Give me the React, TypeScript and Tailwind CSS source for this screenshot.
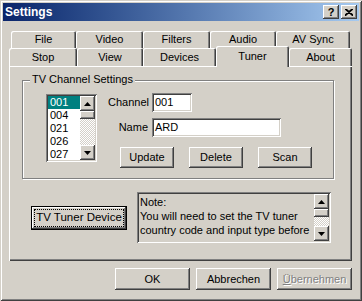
const raised =
  "bg-[#d4d0c8] shadow-[inset_-1px_-1px_#404040,inset_1px_1px_#ffffff,inset_-2px_-2px_#808080,inset_2px_2px_#d4d0c8]";
const sunken =
  "shadow-[inset_1px_1px_#808080,inset_-1px_-1px_#ffffff,inset_2px_2px_#404040,inset_-2px_-2px_#d4d0c8]";
const tabShadow =
  "shadow-[inset_1px_1px_#ffffff,inset_-1px_0_#404040,inset_-2px_0_#808080]";

const Arrow = ({ up }: { up?: boolean }) => (
  <svg width="7" height="4" viewBox="0 0 7 4">
    {up ? <polygon points="3.5,0 7,4 0,4" fill="#000" /> : <polygon points="0,0 7,0 3.5,4" fill="#000" />}
  </svg>
);

const ScrollBar = () => (
  <div className="flex w-[15px] shrink-0 flex-col self-stretch">
    <div className={`flex h-[15px] items-center justify-center ${raised}`}>
      <Arrow up />
    </div>
    <div className={`h-[8px] ${raised}`} />
    <div className="flex-1 bg-[image:repeating-conic-gradient(#ffffff_0%_25%,#d4d0c8_0%_50%)] bg-[length:2px_2px]" />
    <div className={`flex h-[15px] items-center justify-center ${raised}`}>
      <Arrow />
    </div>
  </div>
);

const Tab = ({ label, w }: { label: string; w: string }) => (
  <div className={`flex h-full items-center justify-center rounded-t-[2px] bg-[#d4d0c8] ${tabShadow} ${w}`}>
    {label}
  </div>
);

const Btn = ({ label, w, h }: { label: React.ReactNode; w: string; h: string }) => (
  <div className={`flex items-center justify-center ${raised} ${w} ${h}`}>{label}</div>
);

export default function App() {
  const channels = ["001", "004", "021", "026", "027"];
  return (
    <div className="h-[301px] w-[362px] overflow-hidden bg-[#d4d0c8] p-[3px] font-['Liberation_Sans',Arial,sans-serif] text-[11px] text-black shadow-[inset_1px_1px_#d4d0c8,inset_-1px_-1px_#404040,inset_2px_2px_#ffffff,inset_-2px_-2px_#808080]">
      {/* title bar */}
      <div className="flex h-[18px] items-center justify-between bg-gradient-to-r from-[#0a246a] to-[#a6caf0] pl-[2px] pr-[2px]">
        <span className="text-[12px] font-bold text-white">Settings</span>
        <div className="flex gap-[2px]">
          <div className={`flex h-[14px] w-[16px] items-center justify-center text-[11px] font-bold leading-none ${raised}`}>?</div>
          <div className={`flex h-[14px] w-[16px] items-center justify-center ${raised}`}>
            <svg width="8" height="7" viewBox="0 0 8 7">
              <path d="M0 0 L8 7 M1 0 L8 6 M8 0 L0 7 M7 0 L0 6" stroke="#000" strokeWidth="1.2" />
            </svg>
          </div>
        </div>
      </div>

      {/* tab rows */}
      <div className="mt-[10px] ml-[8px] flex h-[17px]">
        <Tab label="File" w="w-[65px]" />
        <Tab label="Video" w="w-[67px]" />
        <Tab label="Filters" w="w-[67px]" />
        <Tab label="Audio" w="w-[66px]" />
        <Tab label="AV Sync" w="w-[74px]" />
      </div>
      <div className="ml-[6px] flex h-[18px]">
        <Tab label="Stop" w="w-[68px]" />
        <Tab label="View" w="w-[66px]" />
        <Tab label="Devices" w="w-[73px]" />
        <div className={`relative z-10 -mt-[2px] -mb-[1px] flex h-[21px] w-[73px] items-start justify-center rounded-t-[2px] bg-[#d4d0c8] pt-[2px] ${tabShadow}`}>
          Tuner
        </div>
        <Tab label="About" w="w-[63px]" />
      </div>

      {/* tab page */}
      <div className="ml-[6px] h-[195px] w-[343px] pt-[14px] shadow-[inset_1px_1px_#ffffff,inset_-1px_-1px_#404040,inset_-2px_-2px_#808080]">
        <div className="relative ml-[13px] h-[99px] w-[312px] border border-[#808080] shadow-[1px_1px_0_#ffffff,inset_1px_1px_0_#ffffff]">
          <span className="absolute -top-[8px] left-[7px] bg-[#d4d0c8] px-[2px] leading-[13px]">TV Channel Settings</span>
          <div className="flex">
            {/* list box */}
            <div className={`ml-[23px] mt-[13px] flex h-[68px] w-[51px] bg-white p-[2px] ${sunken}`}>
              <div className="flex-1">
                {channels.map((c, i) => (
                  <div
                    key={c}
                    className={`h-[13px] pl-[2px] leading-[13px] ${i === 0 ? "bg-[#008080] text-white" : ""}`}
                  >
                    {c}
                  </div>
                ))}
              </div>
              <ScrollBar />
            </div>

            {/* fields */}
            <div className="ml-[11px] mt-[12px] flex flex-col">
              <div className="flex items-center">
                <span className="w-[40px] text-right">Channel</span>
                <div className={`ml-[4px] h-[19px] w-[40px] bg-white pl-[3px] leading-[19px] ${sunken}`}>001</div>
              </div>
              <div className="mt-[6px] flex items-center">
                <span className="w-[40px] text-right">Name</span>
                <div className={`ml-[4px] h-[19px] w-[129px] bg-white pl-[3px] leading-[19px] ${sunken}`}>ARD</div>
              </div>
              <div className="mt-[10px] ml-[12px] flex gap-[15px]">
                <Btn label="Update" w="w-[54px]" h="h-[21px]" />
                <Btn label="Delete" w="w-[54px]" h="h-[21px]" />
                <Btn label="Scan" w="w-[54px]" h="h-[21px]" />
              </div>
            </div>
          </div>
        </div>

        {/* device + note */}
        <div className="mt-[13px] ml-[22px] flex items-center">
          <div className="flex h-[24px] w-[96px] items-center justify-center border border-black p-[2px] shadow-[inset_-1px_-1px_#404040,inset_1px_1px_#ffffff,inset_-2px_-2px_#808080]">
            <div className="flex h-full w-full items-center justify-center whitespace-nowrap border border-dotted border-black text-[11.5px]">
              TV Tuner Device
            </div>
          </div>
          <div className={`ml-[10px] flex h-[51px] w-[194px] p-[2px] ${sunken}`}>
            <div className="flex-1 pl-[1px] pt-[1px] text-[11px] leading-[14px]">
              Note:
              <br />
              You will need to set the TV tuner
              <br />
              country code and input type before
            </div>
            <ScrollBar />
          </div>
        </div>
      </div>

      {/* dialog buttons */}
      <div className="mt-[7px] mr-[7px] flex justify-end gap-[6px]">
        <Btn label="OK" w="w-[75px]" h="h-[22px]" />
        <Btn label="Abbrechen" w="w-[75px]" h="h-[22px]" />
        <Btn
          label={
            <span className="text-[#808080] [text-shadow:1px_1px_0_#ffffff]">
              <span className="underline">Ü</span>bernehmen
            </span>
          }
          w="w-[75px]"
          h="h-[22px]"
        />
      </div>
    </div>
  );
}
